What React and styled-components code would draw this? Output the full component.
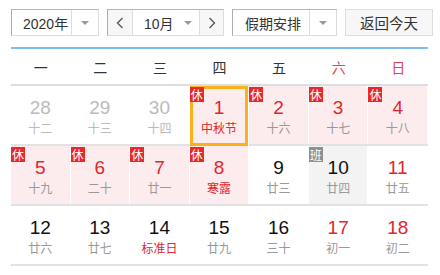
import React from 'react'
import styled, { createGlobalStyle } from 'styled-components'

const GlobalStyle = createGlobalStyle`
  body {
    margin: 0;
    background: #fff;
    font-family: "Liberation Sans", "Noto Sans CJK SC", sans-serif;
  }
`

const weeks = [
  [
    { d: 28, l: '十二', past: true },
    { d: 29, l: '十三', past: true },
    { d: 30, l: '十四', past: true },
    { d: 1, l: '中秋节', hol: true, fest: true, selected: true },
    { d: 2, l: '十六', hol: true },
    { d: 3, l: '十七', hol: true },
    { d: 4, l: '十八', hol: true },
  ],
  [
    { d: 5, l: '十九', hol: true },
    { d: 6, l: '二十', hol: true },
    { d: 7, l: '廿一', hol: true },
    { d: 8, l: '寒露', hol: true, fest: true },
    { d: 9, l: '廿三' },
    { d: 10, l: '廿四', work: true },
    { d: 11, l: '廿五', weekend: true },
  ],
  [
    { d: 12, l: '廿六' },
    { d: 13, l: '廿七' },
    { d: 14, l: '标准日', fest: true },
    { d: 15, l: '廿九' },
    { d: 16, l: '三十' },
    { d: 17, l: '初一', weekend: true },
    { d: 18, l: '初二', weekend: true },
  ],
]

const weekdays = ['一', '二', '三', '四', '五', '六', '日']

function numColor(c) {
  if (c.past) return '#bbb'
  if (c.hol || c.weekend) return '#e0262e'
  return '#111'
}

function lunarColor(c) {
  if (c.past) return '#bbb'
  if (c.fest) return '#e0262e'
  return '#999'
}

function App() {
  return (
    <>
      <GlobalStyle />
      <Wrap>
        <Toolbar>
          <Select>
            <Label $w={60} $pl={11}>2020年</Label>
            <ArrowBox $w={26}><Caret /></ArrowBox>
          </Select>
          <Select>
            <Nav $w={25}>
              <Chevron viewBox="0 0 8 12"><path d="M6.5 1 L1.5 6 L6.5 11" /></Chevron>
            </Nav>
            <Label $w={67} $pl={11}>
              10月
              <Caret $gap={10} />
            </Label>
            <Nav $w={23} $last>
              <Chevron viewBox="0 0 8 12"><path d="M1.5 1 L6.5 6 L1.5 11" /></Chevron>
            </Nav>
          </Select>
          <Select>
            <Label $w={77} $pl={12}>假期安排</Label>
            <ArrowBox $w={26}><Caret /></ArrowBox>
          </Select>
          <Button>返回今天</Button>
        </Toolbar>
        <BlueLine />
        <WeekHead>
          {weekdays.map((w, i) => (
            <WeekDay key={w} $red={i >= 5}>{w}</WeekDay>
          ))}
        </WeekHead>
        {weeks.map((row, ri) => (
          <Row key={ri}>
            {row.map((c) => (
              <Cell key={c.d} $hol={c.hol} $work={c.work} $selected={c.selected}>
                {c.hol && <Badge>休</Badge>}
                {c.work && <Badge $gray>班</Badge>}
                <Num style={{ color: numColor(c) }}>{c.d}</Num>
                <Lunar style={{ color: lunarColor(c) }}>{c.l}</Lunar>
              </Cell>
            ))}
          </Row>
        ))}
      </Wrap>
    </>
  )
}

export default App

const Wrap = styled.div`
  width: 417px;
  padding: 9px 0 0 11px;
`

const Toolbar = styled.div`
  display: flex;
  gap: 8px;
  height: 27px;
`

const Select = styled.div`
  display: flex;
  flex-shrink: 0;
  height: 27px;
  box-sizing: border-box;
  border: 1px solid #dcdcdc;
  border-left-color: #ababab;
  border-top-color: #b5b5b5;
  background: #fff;
  color: #333;
  font-size: 14px;
`

const Label = styled.div`
  display: flex;
  align-items: center;
  flex-shrink: 0;
  white-space: nowrap;
  width: ${p => p.$w}px;
  padding-left: ${p => p.$pl}px;
  box-sizing: border-box;
  border-right: 1px solid #ddd;
`

const ArrowBox = styled.div`
  display: flex;
  align-items: center;
  justify-content: center;
  width: ${p => p.$w}px;
`

const Nav = styled.div`
  display: flex;
  align-items: center;
  justify-content: center;
  flex-shrink: 0;
  width: ${p => p.$w}px;
  box-sizing: border-box;
  background: #f7f7f7;
  border-right: ${p => (p.$last ? 'none' : '1px solid #ddd')};
`

const Caret = styled.span`
  display: inline-block;
  flex-shrink: 0;
  margin-left: ${p => p.$gap || 0}px;
  width: 0;
  height: 0;
  border-left: 4px solid transparent;
  border-right: 4px solid transparent;
  border-top: 4px solid #999;
`

const Chevron = styled.svg`
  width: 8px;
  height: 12px;
  fill: none;
  stroke: #555;
  stroke-width: 1.3;
`

const Button = styled.div`
  display: flex;
  align-items: center;
  justify-content: center;
  flex-shrink: 0;
  width: 88px;
  height: 27px;
  box-sizing: border-box;
  border: 1px solid #ddd;
  background: #f7f7f7;
  color: #333;
  font-size: 14.5px;
`

const BlueLine = styled.div`
  margin-top: 11px;
  height: 2px;
  background: #7fbcf2;
`

const WeekHead = styled.div`
  display: grid;
  grid-template-columns: repeat(7, 1fr);
  height: 35px;
  border-bottom: 2px solid #dedede;
`

const WeekDay = styled.div`
  display: flex;
  align-items: center;
  justify-content: center;
  font-size: 14px;
  color: ${p => (p.$red ? '#e8405a' : '#333')};
`

const Row = styled.div`
  display: grid;
  grid-template-columns: repeat(7, 1fr);
  border-bottom: 2px solid #e2e2e2;
`

const Cell = styled.div`
  position: relative;
  height: 58px;
  box-sizing: border-box;
  padding-top: 11px;
  border-right: 1px solid #fff;
  text-align: center;
  background: ${p => (p.$hol ? '#fdeced' : p.$work ? '#f3f3f3' : '#fff')};
  ${p => p.$selected && `
    margin-bottom: -2px;
    height: 60px;
    box-shadow: inset 0 0 0 3px #f9b21c;
    z-index: 1;
  `}
`

const Badge = styled.span`
  position: absolute;
  top: 1px;
  left: 0;
  width: 14px;
  height: 15px;
  line-height: 15px;
  font-size: 12px;
  color: #fff;
  text-align: center;
  background: ${p => (p.$gray ? '#8f8f8f' : '#e8282b')};
  font-family: "Noto Sans CJK SC", sans-serif;
`

const Num = styled.div`
  font-size: 19px;
  line-height: 22px;
`

const Lunar = styled.div`
  margin-top: 2px;
  font-size: 12px;
  line-height: 16px;
`
